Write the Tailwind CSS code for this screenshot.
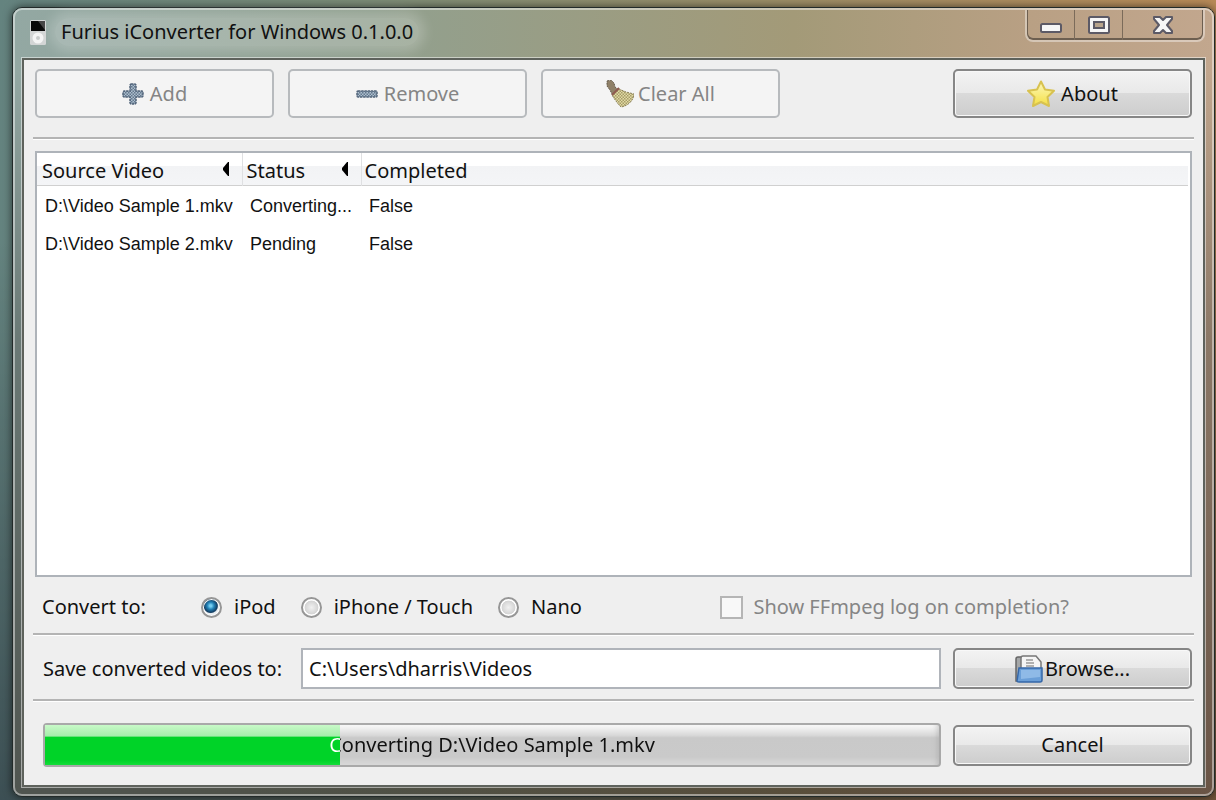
<!DOCTYPE html>
<html lang="en">
<head>
<meta charset="utf-8">
<meta name="viewport" content="width=device-width, initial-scale=1">
<title>Furius iConverter for Windows 0.1.0.0</title>
<script src="https://cdn.jsdelivr.net/npm/@tailwindcss/browser@4"></script>
</head>
<body class="bg-[linear-gradient(to_bottom,#fff_30%,#9a9aa8_100%),linear-gradient(to_right,#64837f_0%,#7c8c77_30%,#9c8d66_65%,#b88a58_100%)] bg-blend-multiply font-['Noto_Sans','Liberation_Sans',sans-serif] text-xl leading-7 text-[#111]">
<div class="flex h-screen min-h-[560px] flex-col pt-[7px] pr-px pb-[3px] pl-3">
  <div class="flex min-h-0 flex-1 flex-col rounded-[10px] border border-[#222a29] shadow-[0_0_8px_#0009]">
    <div class="flex min-h-0 flex-1 flex-col rounded-[9px] border-2 border-white/45 bg-[linear-gradient(to_bottom,#fff_8%,#b8b8b8_42%,#8a807c_100%),linear-gradient(to_right,#93a8a3_0%,#91a08f_30%,#a39a78_65%,#b9a084_85%,#c2a78e_100%)] bg-origin-border bg-blend-multiply pr-[7px] pb-[7px] pl-[7px]">

      <header class="flex h-12 shrink-0 items-start">
        <svg class="mt-2 ml-[7px] h-7 w-[18px]" viewBox="0 0 18 28" aria-hidden="true">
          <rect x="1" y="2" width="16" height="25" rx="1.5" fill="#d3d5d5"/>
          <path d="M2 3h14v10H2z" fill="#080808"/><path d="M9 3h7v9z" fill="#444"/>
          <circle cx="9" cy="20" r="5.5" fill="#f4f4f4"/><circle cx="9" cy="20" r="2" fill="#c9cccc"/>
        </svg>
        <h1 class="mt-2 ml-2 rounded-full bg-white/20 px-1.5 text-xl leading-7 shadow-[0_0_12px_6px_#ffffff33]">Furius iConverter for Windows 0.1.0.0</h1>
        <div class="ml-auto flex h-8 shrink-0 overflow-hidden rounded-b-lg border-2 border-t-0 border-white/40 shadow-[inset_0_-1px_0_1px_#6d5f50]">
          <button aria-label="Minimize" class="flex w-12 items-center justify-center border-r border-[#7b6b5a]">
            <svg class="h-6 w-6" viewBox="0 0 24 24"><rect x="2" y="11" width="20" height="8" rx="1.5" fill="#f6f6f6" stroke="#5c5a66" stroke-width="2"/></svg>
          </button>
          <button aria-label="Maximize" class="flex w-12 items-center justify-center border-r border-[#7b6b5a]">
            <svg class="h-6 w-6" viewBox="0 0 24 24"><rect x="2" y="4" width="20" height="16" rx="1.5" fill="#f6f6f6" stroke="#5c5a66" stroke-width="2"/><rect x="7" y="9" width="10" height="6" fill="#b8a48c" stroke="#5c5a66" stroke-width="2"/></svg>
          </button>
          <button aria-label="Close" class="flex w-20 items-center justify-center">
            <svg class="h-6 w-6" viewBox="0 0 24 24"><path d="M3 4h6l3 3 3-3h6v2l-5 6 5 6v2h-6l-3-3-3 3H3v-2l5-6-5-6z" fill="#f6f6f6" stroke="#5c5a66" stroke-width="2" stroke-linejoin="round"/></svg>
          </button>
        </div>
      </header>

      <main class="flex min-h-0 flex-1 flex-col border-2 border-[#5e625c] bg-[#efefef] px-[11px] pt-[9px] pb-[18px] outline-1 outline-white/50">
        <div class="flex h-[49px] shrink-0 gap-3.5">
          <button disabled class="flex w-[239px] items-center justify-center gap-1.5 rounded-[5px] border-2 border-[#b7babd] bg-[#f4f4f4] text-[#858585]">
            <svg class="h-[22px] w-[22px]" viewBox="0 0 22 22" aria-hidden="true">
              <defs><pattern id="blueDither" width="3" height="3" patternUnits="userSpaceOnUse"><rect width="3" height="3" fill="#aebfce"/><rect width="1.500" height="1.500" fill="#64798f"/><rect x="1.500" y="1.500" width="1.500" height="1.500" fill="#64798f"/></pattern></defs>
              <path d="M9 1h4l1 1v6h6l1 1v4l-1 1h-6v6l-1 1H9l-1-1v-6H2l-1-1V9l1-1h6V2z" fill="url(#blueDither)" stroke="#52647a" stroke-width="1.500" stroke-dasharray="2.500 .7"/>
            </svg>Add</button>
          <button disabled class="flex w-[239px] items-center justify-center gap-1.5 rounded-[5px] border-2 border-[#b7babd] bg-[#f4f4f4] text-[#858585]">
            <svg class="h-[22px] w-[22px]" viewBox="0 0 22 22" aria-hidden="true"><rect x="1" y="8" width="20" height="6" rx="1" fill="url(#blueDither)" stroke="#52647a" stroke-width="1.500" stroke-dasharray="2.500 .7"/></svg>Remove</button>
          <button disabled class="flex w-[239px] items-center justify-center gap-1 rounded-[5px] border-2 border-[#b7babd] bg-[#f4f4f4] text-[#858585]">
            <svg class="h-7 w-7" viewBox="0 0 28 28" aria-hidden="true">
              <defs><pattern id="strawDither" width="3" height="3" patternUnits="userSpaceOnUse"><rect width="3" height="3" fill="#e2dba6"/><rect width="1.500" height="1.500" fill="#a69c68"/><rect x="1.500" y="1.500" width="1.500" height="1.500" fill="#a69c68"/></pattern></defs>
              <path d="M1 1l4-1 3 3 1 4 4 3-6 6-3-6-3-4z" fill="#8f8068" stroke="#655b4c" stroke-dasharray="2 1"/>
              <path d="M6 15l7-6 7 3 8 2c0 6-6 12-13 13-3-3-6-7-9-12z" fill="url(#strawDither)" stroke="#8b815b" stroke-dasharray="2 1"/>
              <path d="M6 15l7-7" stroke="#8f5a50" stroke-width="2"/>
            </svg>Clear All</button>
          <button class="ml-auto flex w-[239px] items-center justify-center gap-1.5 rounded-[5px] border-2 border-[#868686] bg-[linear-gradient(#f3f3f3,#e9e9e9_48%,#dadada_49%,#cdcdcd)] shadow-[inset_0_0_0_1px_#f8f8f8]">
            <svg class="h-7 w-7" viewBox="0 0 28 28" aria-hidden="true">
              <defs><linearGradient id="gold" x1="0" y1="0" x2="0" y2="1"><stop offset="0" stop-color="#fdf8bc"/><stop offset="1" stop-color="#f4df43"/></linearGradient></defs>
              <path d="M14 1.500l4 8 9 1.300-6.500 6.200 1.500 9-8-4-8 4 1.500-9L1 10.800l9-1.300z" fill="url(#gold)" stroke="#d8c250" stroke-width="2" stroke-linejoin="round"/>
            </svg>About</button>
        </div>

        <div class="-mx-0.5 mt-[19px] h-[3px] shrink-0 border-t-2 border-[#b4b4b4] bg-white"></div>

        <div class="mt-[11px] min-h-0 flex-1 overflow-hidden border-2 border-[#aeb3b9] bg-white pr-0.5">
          <table class="w-full table-fixed border-collapse text-left">
            <colgroup><col class="w-[205px]"><col class="w-[119px]"><col></colgroup>
            <thead>
              <tr class="h-8 border-b border-[#d0d0d0] bg-[linear-gradient(#fff_40%,#f2f3f5_42%,#f4f5f7)]">
                <th class="border-r border-[#dfe0e2] pt-1 pr-3 pb-0 pl-[5px] font-normal"><div class="flex items-center justify-between whitespace-nowrap">Source Video<svg class="mb-1 h-3.5 w-2" viewBox="0 0 8 14" aria-hidden="true"><path d="M7 0v14H6L1 8V6l5-6z" fill="#000"/></svg></div></th>
                <th class="border-r border-[#dfe0e2] pt-1 pr-3 pb-0 pl-1 font-normal"><div class="flex items-center justify-between whitespace-nowrap">Status<svg class="mb-1 h-3.5 w-2" viewBox="0 0 8 14" aria-hidden="true"><path d="M7 0v14H6L1 8V6l5-6z" fill="#000"/></svg></div></th>
                <th class="pt-1 pb-0 pl-[3px] font-normal">Completed</th>
              </tr>
            </thead>
            <tbody class="font-['Liberation_Sans',sans-serif] text-lg whitespace-nowrap">
              <tr class="h-[38px]"><td class="pt-0.5 pl-2">D:\Video Sample 1.mkv</td><td class="pt-0.5 pl-2">Converting...</td><td class="pt-0.5 pl-2">False</td></tr>
              <tr class="h-[38px]"><td class="pt-0.5 pl-2">D:\Video Sample 2.mkv</td><td class="pt-0.5 pl-2">Pending</td><td class="pt-0.5 pl-2">False</td></tr>
            </tbody>
          </table>
        </div>

        <div class="flex h-14 shrink-0 items-center pt-1 pl-[7px] whitespace-nowrap">
          <fieldset class="flex items-center">
            <legend class="float-left w-[159px]">Convert to:</legend>
            <label class="flex items-center gap-3"><input type="radio" name="device" checked class="h-[21px] w-[21px] appearance-none rounded-full border-2 border-[#969696] bg-[#e7e7e7] shadow-[inset_0_0_0_1px_#fff] checked:bg-[radial-gradient(circle_at_45%_40%,#74cdf0_0_8%,#2383b8_25%,#123c61_48%,#e9edf0_56%)]">iPod</label>
            <label class="ml-[25px] flex items-center gap-3"><input type="radio" name="device" class="h-[21px] w-[21px] appearance-none rounded-full border-2 border-[#969696] bg-[radial-gradient(#f1f1f1,#d4d4d4_55%,#fff_60%)]">iPhone / Touch</label>
            <label class="ml-[25px] flex items-center gap-3"><input type="radio" name="device" class="h-[21px] w-[21px] appearance-none rounded-full border-2 border-[#969696] bg-[radial-gradient(#f1f1f1,#d4d4d4_55%,#fff_60%)]">Nano</label>
          </fieldset>
          <label class="mr-[123px] ml-auto flex items-center gap-2.5 text-[#858585]"><input type="checkbox" disabled class="h-[23px] w-[23px] appearance-none border-2 border-[#b5b5b5] bg-[#f8f8f8]">Show FFmpeg log on completion?</label>
        </div>

        <div class="-mx-0.5 h-[3px] shrink-0 border-t-2 border-[#b4b4b4] bg-white"></div>

        <div class="mt-3 flex h-[41px] shrink-0 items-stretch">
          <label for="dest" class="flex w-[266px] shrink-0 items-center pl-2 whitespace-nowrap">Save converted videos to:</label>
          <input id="dest" type="text" value="C:\Users\dharris\Videos" class="min-w-0 flex-1 border-2 border-[#b0b4ba] bg-white px-1.5">
          <button class="ml-3 flex w-[239px] shrink-0 items-center justify-center gap-0.5 rounded-[5px] border-2 border-[#868686] bg-[linear-gradient(#f3f3f3,#e9e9e9_48%,#dadada_49%,#cdcdcd)] shadow-[inset_0_0_0_1px_#f8f8f8]">
            <svg class="h-7 w-7" viewBox="0 0 28 28" aria-hidden="true">
              <path d="M1 26V4q0-2 2-2h5v24z" fill="#a5a7a8" stroke="#666" stroke-width="1.500"/>
              <path d="M6 16V3q0-2 2-2h13l5 6v9z" fill="#f5f5f5" stroke="#777" stroke-width="1.500"/>
              <path d="M11 5h7M11 8h8M11 11h8" stroke="#999" stroke-width="1.500"/>
              <path d="M4 13h23v12q0 2-2 2H4q-2 0-2-1z" fill="#6b9fd8" stroke="#3567a8" stroke-width="1.500"/>
              <path d="M6 15h19v7L6 24z" fill="#8fbae7"/>
            </svg>Browse...</button>
        </div>

        <div class="-mx-0.5 mt-2.5 h-[3px] shrink-0 border-t-2 border-[#b4b4b4] bg-white"></div>

        <div class="mt-[21px] flex h-11 shrink-0 items-center pl-2">
          <div role="progressbar" aria-label="Conversion" aria-valuenow="33" aria-valuemin="0" aria-valuemax="100" class="relative h-full min-w-0 flex-1 rounded border-2 border-[#a9a9a9] bg-[linear-gradient(#fafafa,#d8d8d8_26%,#c9c9c9_32%,#cacaca_80%,#dadada)] shadow-[inset_-5px_0_5px_-3px_#9996]">
            <div class="h-full bg-[linear-gradient(#c8fac8,#a4edaa_28%,#00d328_30%,#00d328_88%,#14dd3a)]" style="width:33%"></div>
            <div class="absolute inset-0 flex items-center justify-center bg-clip-text text-transparent" style="background-image:linear-gradient(to right,#fff 33%,#111 33%)">Converting D:\Video Sample 1.mkv</div>
          </div>
          <button class="ml-3 h-[41px] w-[239px] shrink-0 rounded-[5px] border-2 border-[#868686] bg-[linear-gradient(#f3f3f3,#e9e9e9_48%,#dadada_49%,#cdcdcd)] shadow-[inset_0_0_0_1px_#f8f8f8]">Cancel</button>
        </div>
      </main>
    </div>
  </div>
</div>
</body>
</html>
